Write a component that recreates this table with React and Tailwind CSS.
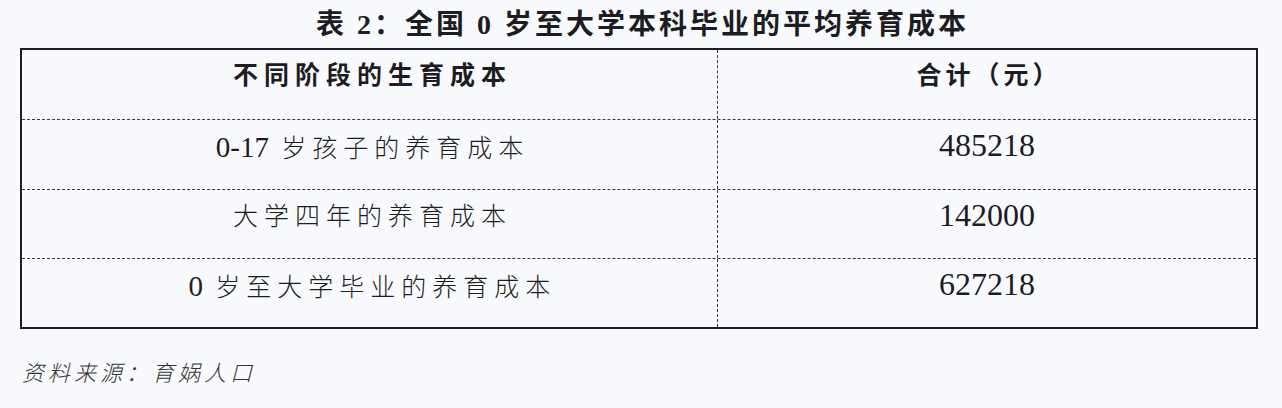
export default function App() {
  const font = { fontFamily: '"Liberation Serif", "Noto Sans CJK SC", serif' };
  const rows = [
    { pre: '0-17', label: ' 岁孩子的养育成本', value: '485218', h: 'h-[70px]' },
    { pre: '', label: '大学四年的养育成本', value: '142000', h: 'h-[70px]' },
    { pre: '0', label: ' 岁至大学毕业的养育成本', value: '627218', h: 'h-[68px]' },
  ];
  return (
    <div className="w-[1282px] h-[408px] bg-[#f9fafd] text-[#1c1c22]" style={font}>
      <div className="h-[48px] flex items-center justify-center pt-[2px]">
        <span className="text-[28px] font-bold tracking-[3px] leading-none pl-[3px]">表 2：全国 0 岁至大学本科毕业的平均养育成本</span>
      </div>
      <div className="ml-[20px] w-[1238px] h-[281px] border-2 border-[#1e1b2c] flex flex-col">
        <div className="grid grid-cols-[696px_1fr] h-[70px] border-b border-dashed border-[#3a3a3a]">
          <div className="border-r border-dashed border-[#3a3a3a] flex justify-center pt-[10px]">
            <span className="text-[25px] font-bold tracking-[6px] leading-[32px] pl-[6px]">不同阶段的生育成本</span>
          </div>
          <div className="flex justify-center pt-[10px]">
            <span className="text-[25px] font-bold tracking-[4px] leading-[32px] pl-[4px]">合计（元）</span>
          </div>
        </div>
        {rows.map((r, i) => (
          <div key={i} className={`grid grid-cols-[696px_1fr] ${r.h} ${i < rows.length - 1 ? 'border-b border-dashed border-[#3a3a3a]' : ''}`}>
            <div className="border-r border-dashed border-[#3a3a3a] flex justify-center pt-[10px]">
              <span className="text-[25px] font-light tracking-[6px] leading-[34px] pl-[6px]">
                {r.pre && <span className="text-[29px] tracking-normal">{r.pre}</span>}
                {r.label}
              </span>
            </div>
            <div className="flex justify-center pt-[7px]">
              <span className="text-[32px] leading-[36px]">{r.value}</span>
            </div>
          </div>
        ))}
      </div>
      <div className="pl-[22px] pt-[34px]">
        <span className="text-[22px] italic font-light tracking-[4px] text-[#333] leading-none">资料来源：育娲人口</span>
      </div>
    </div>
  );
}
